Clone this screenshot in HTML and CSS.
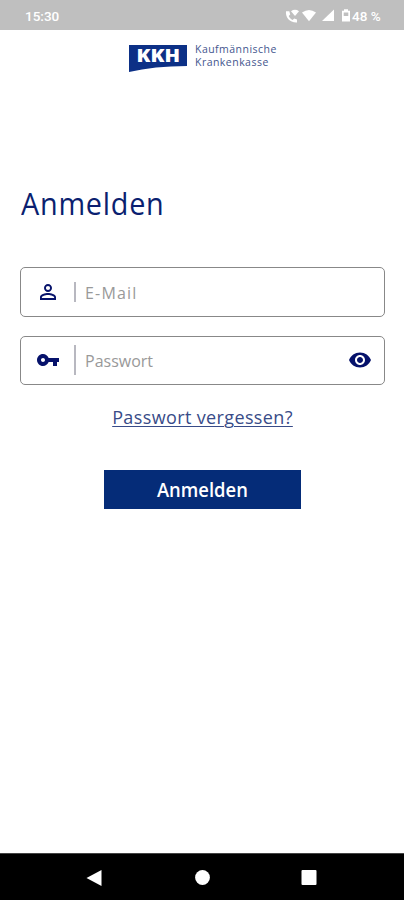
FILE: index.html
```html
<!DOCTYPE html>
<html lang="de">
<head>
<meta charset="utf-8">
<meta name="viewport" content="width=device-width">
<title>Anmelden</title>
<link rel="stylesheet" href="styles.css">
</head>
<body>
<header class="status">
  <span class="time">15:30</span>
  <svg class="status-icons" width="67" height="16" viewBox="0 0 67 16" fill="#fff">
    <path d="M2 3.200C1.200 9.500 6 14.800 13 14.400V11.400L10.200 10.500L8.600 12C6.700 11.100 5.500 9.800 4.700 8.100L6.200 6.500L5.300 3.200Z"/>
    <path d="M7 3.200Q11 .4 15 3.200L11 8Z"/>
    <path d="M18 4.500Q25 -.6 32 4.500L25 13.200Z"/>
    <path d="M50 1.500V13H38Z"/>
    <path fill-rule="evenodd" d="M60 1.200H64V2.700H66V13.500H58V2.700H60ZM59.700 4.400V8H64.300V4.400Z"/>
  </svg>
  <span class="battery">48 %</span>
</header>
<main class="screen">
  <div class="brand">
    <svg class="flag" width="58" height="31" viewBox="0 -4 58 31">
      <path fill="#0c3086" d="M0 0H58V21Q25 21 0 27Z"/>
      <text class="flag-text" x="7.500" y="17" textLength="43.500" lengthAdjust="spacingAndGlyphs">KKH</text>
    </svg>
    <div class="brand-name">Kaufmännische<br>Krankenkasse</div>
  </div>
  <h1 class="title">Anmelden</h1>
  <form class="form">
    <div class="field">
      <svg class="icon" width="24" height="24" viewBox="0 0 24 24"><path d="M12 5.900a2.100 2.100 0 1 1 0 4.200 2.100 2.100 0 0 1 0-4.200m0 9c2.970 0 6.100 1.460 6.100 2.100v1.100H5.900V17c0-.64 3.130-2.100 6.100-2.100M12 4C9.790 4 8 5.790 8 8s1.790 4 4 4 4-1.790 4-4-1.790-4-4-4zm0 9c-2.670 0-8 1.340-8 4v3h16v-3c0-2.660-5.330-4-8-4z"/></svg>
      <span class="bar short"></span>
      <span class="hint mail">E-Mail</span>
    </div>
    <div class="field">
      <svg class="icon" width="24" height="24" viewBox="0 0 24 24"><path d="M12.650 10C11.830 7.670 9.610 6 7 6c-3.310 0-6 2.690-6 6s2.690 6 6 6c2.610 0 4.830-1.670 5.650-4H17v4h4v-4h2v-4H12.650zM7 14c-1.100 0-2-.9-2-2s.9-2 2-2 2 .9 2 2-.9 2-2 2z"/></svg>
      <span class="bar"></span>
      <span class="hint">Passwort</span>
      <svg class="icon eye" width="24" height="24" viewBox="0 0 24 24"><path d="M12 4.500C7 4.500 2.730 7.610 1 12c1.730 4.390 6 7.500 11 7.500s9.270-3.110 11-7.500c-1.730-4.390-6-7.500-11-7.500zM12 17c-2.760 0-5-2.240-5-5s2.240-5 5-5 5 2.240 5 5-2.240 5-5 5zm0-8c-1.660 0-3 1.340-3 3s1.340 3 3 3 3-1.340 3-3-1.340-3-3-3z"/></svg>
    </div>
    <a class="forgot">Passwort vergessen?</a>
    <button class="submit" type="button"><span class="submit-label">Anmelden</span></button>
  </form>
</main>
<nav class="nav">
  <svg width="16" height="18" viewBox="0 0 16 18"><path fill="#fff" d="M15.500 1V17L.5 9Z"/></svg>
  <svg width="16" height="16" viewBox="0 0 16 16"><circle cx="8.500" cy="7.500" r="7.400" fill="#fff"/></svg>
  <svg width="16" height="16" viewBox="0 0 16 16"><rect x=".5" y="0" width="15" height="15" rx="1" fill="#fff"/></svg>
</nav>
</body>
</html>
```
FILE: styles.css
```css
* { box-sizing: border-box; }
body {
  margin: 0;
  height: 900px;
  display: flex;
  flex-direction: column;
  overflow: hidden;
  background: #fff;
  font-family: "Open Sans", "Noto Sans", sans-serif;
  color: #0b1f70;
}
.status {
  height: 30px;
  flex: none;
  display: flex;
  align-items: center;
  padding: 2px 22px 0 25px;
  background: #bfbfbf;
  color: #fff;
  font: 500 13.500px/20px Roboto, sans-serif;
}
.time { flex: 1; }
.status-icons { margin-right: 1px; }
.battery { width: 30px; font-size: 13.500px; white-space: nowrap; }
.screen { flex: 1; display: flex; flex-direction: column; }
.brand {
  display: flex;
  height: 42px;
  padding: 11px 0 0 129px;
  gap: 8px;
}
.flag { flex: none; }
.flag-text { font: 800 17.500px "Open Sans", sans-serif; fill: #fff; }
.brand-name {
  margin-top: 2px;
  font-size: 10.500px;
  line-height: 12.500px;
  letter-spacing: .47px;
  color: #44568e;
  white-space: nowrap;
}
.title {
  margin: 108px 0 0 21px;
  height: 46px;
  font-size: 31px;
  line-height: 46px;
  font-weight: 400;
  letter-spacing: .8px;
  transform: scaleX(.93);
  transform-origin: left;
}
.form {
  display: flex;
  flex-direction: column;
  padding: 41px 19px 0 20px;
}
.field {
  height: 49.500px;
  margin-bottom: 19px;
  display: flex;
  align-items: center;
  padding: 0 12px 0 15px;
  border: 1px solid #888;
  border-radius: 5px;
}
.icon { fill: #06126b; flex: none; }
.eye { margin-left: auto; }
.bar { width: 2px; height: 30px; margin: 0 9px 0 14px; background: #b8b8c0; }
.bar.short { height: 20px; }
.hint { font-size: 16px; line-height: 24px; color: #999; padding-top: 2px; }
.mail { letter-spacing: 1.200px; }
.forgot {
  align-self: center;
  font-size: 18px;
  line-height: 26px;
  letter-spacing: .37px;
  color: #384b88;
  text-decoration: underline;
  text-decoration-thickness: 1px;
  text-underline-offset: 2px;
}
.submit {
  align-self: center;
  width: 197px;
  height: 39px;
  margin-top: 40px;
  padding: 0;
  border: 0;
  background: #052c78;
  color: #fff;
  font: 600 20px/39px "Open Sans", sans-serif;
}
.submit-label { display: inline-block; transform: scaleX(.92); }
.nav {
  height: 47px;
  flex: none;
  display: flex;
  align-items: center;
  justify-content: space-between;
  padding: 1px 87px 0 86px;
  border-top: 1px solid #444;
  background: #000;
}
```
